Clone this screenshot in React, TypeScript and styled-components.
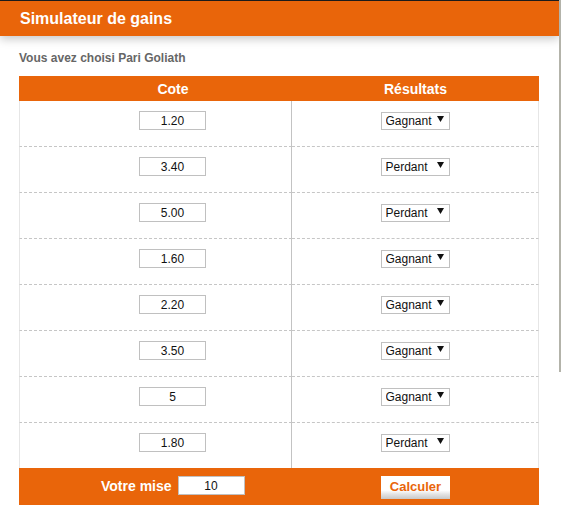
import React from "react";
import styled, { createGlobalStyle } from "styled-components";

const GlobalStyle = createGlobalStyle`
  html, body { margin: 0; padding: 0; background: #fff; }
  body { font-family: "Liberation Sans", Arial, sans-serif; }
`;

const ORANGE = "#e9650a";

const Page = styled.div`
  position: relative;
  width: 561px;
  height: 520px;
  overflow: hidden;
  background: #fff;
`;

const ScrollEdge = styled.div`
  position: absolute;
  top: 0;
  left: 559px;
  width: 2px;
  height: 372px;
  background: #b3b3aa;
`;

const Header = styled.header`
  width: 559px;
  height: 36px;
  box-sizing: border-box;
  border-top: 1px solid #1b1b1b;
  background: ${ORANGE};
  display: flex;
  align-items: center;
  padding-left: 20px;
  color: #fff;
  font-weight: bold;
  font-size: 16px;
  box-shadow: 0 3px 9px rgba(0, 0, 0, 0.22);
`;

const Content = styled.div`
  padding: 15px 22px 0 19px;
`;

const Intro = styled.p`
  margin: 0 0 11px 0;
  height: 14px;
  line-height: 14px;
  font-size: 12px;
  font-weight: bold;
  color: #666;
`;

const Table = styled.div`
  width: 520px;
  display: grid;
  grid-template-columns: 273px 1fr;
`;

const HeadCell = styled.div<{ $first?: boolean }>`
  height: 25px;
  background: ${ORANGE};
  color: #fff;
  font-weight: bold;
  font-size: 14px;
  display: flex;
  align-items: center;
  justify-content: center;
  padding-left: ${(p) => (p.$first ? "35px" : "0")};
`;

const Cell = styled.div<{ $first?: boolean; $last?: boolean }>`
  height: 45px;
  box-sizing: content-box;
  display: flex;
  justify-content: center;
  align-items: flex-start;
  padding-top: 0;
  border-bottom: ${(p) => (p.$last ? "none" : "1px dashed #c6c6c6")};
  border-left: ${(p) => (p.$first ? "1px solid #e6e6e6" : "none")};
  border-right: ${(p) => (p.$first ? "1px solid #c3c3c3" : "1px solid #e6e6e6")};
  padding-left: ${(p) => (p.$first ? "34px" : "0")};
  & > * {
    margin-top: 10px;
  }
`;

const CoteInput = styled.input`
  width: 67px;
  height: 19px;
  box-sizing: border-box;
  border: 1px solid #c0c0c0;
  padding: 0;
  text-align: center;
  font-family: "Liberation Sans", Arial, sans-serif;
  font-size: 12px;
  color: #111;
  background: #fff;
  outline: none;
`;

const SelectWrap = styled.div`
  position: relative;
  width: 69px;
  height: 18px;
`;

const Select = styled.select`
  appearance: none;
  -webkit-appearance: none;
  width: 69px;
  height: 18px;
  box-sizing: border-box;
  border: 1px solid #c0c0c0;
  border-radius: 0;
  padding: 0 0 0 4px;
  font-family: "Liberation Sans", Arial, sans-serif;
  font-size: 12px;
  color: #111;
  background: #fff;
  outline: none;
`;

const Arrow = styled.svg`
  position: absolute;
  left: 56px;
  top: 5px;
  width: 7px;
  height: 6px;
  pointer-events: none;
`;

const FootCell = styled.div<{ $first?: boolean }>`
  height: 37px;
  background: ${ORANGE};
  display: flex;
  align-items: flex-start;
  justify-content: ${(p) => (p.$first ? "flex-start" : "center")};
  padding-left: ${(p) => (p.$first ? "82px" : "0")};
  gap: 6px;
  padding-top: 8px;
  box-sizing: border-box;
`;

const MiseLabel = styled.label`
  color: #fff;
  font-weight: bold;
  font-size: 14px;
  line-height: 16px;
  height: 19px;
  display: flex;
  align-items: center;
`;

const MiseInput = styled(CoteInput)``;

const CalcButton = styled.button`
  width: 69px;
  height: 23px;
  border: none;
  padding: 0 0 2px 0;
  background: linear-gradient(to bottom, #ffffff 0%, #ffffff 62%, #e2e2e2 80%, #c8c8c8 100%);
  color: ${ORANGE};
  font-family: "Liberation Sans", Arial, sans-serif;
  font-weight: bold;
  font-size: 13px;
  cursor: pointer;
`;

const rows: { cote: string; res: "Gagnant" | "Perdant" }[] = [
  { cote: "1.20", res: "Gagnant" },
  { cote: "3.40", res: "Perdant" },
  { cote: "5.00", res: "Perdant" },
  { cote: "1.60", res: "Gagnant" },
  { cote: "2.20", res: "Gagnant" },
  { cote: "3.50", res: "Gagnant" },
  { cote: "5", res: "Gagnant" },
  { cote: "1.80", res: "Perdant" },
];

export default function App() {
  return (
    <Page>
      <GlobalStyle />
      <Header>Simulateur de gains</Header>
      <Content>
        <Intro>Vous avez choisi Pari Goliath</Intro>
        <Table>
          <HeadCell $first>Cote</HeadCell>
          <HeadCell>Résultats</HeadCell>
          {rows.map((r, i) => {
            const last = i === rows.length - 1;
            return (
              <React.Fragment key={i}>
                <Cell $first $last={last}>
                  <CoteInput defaultValue={r.cote} />
                </Cell>
                <Cell $last={last}>
                  <SelectWrap>
                    <Select defaultValue={r.res}>
                      <option value="Gagnant">Gagnant</option>
                      <option value="Perdant">Perdant</option>
                    </Select>
                    <Arrow viewBox="0 0 7 6">
                      <polygon points="0,0 7,0 3.5,6" fill="#111" />
                    </Arrow>
                  </SelectWrap>
                </Cell>
              </React.Fragment>
            );
          })}
          <FootCell $first>
            <MiseLabel>Votre mise</MiseLabel>
            <MiseInput defaultValue="10" />
          </FootCell>
          <FootCell>
            <CalcButton>Calculer</CalcButton>
          </FootCell>
        </Table>
      </Content>
      <ScrollEdge />
    </Page>
  );
}
